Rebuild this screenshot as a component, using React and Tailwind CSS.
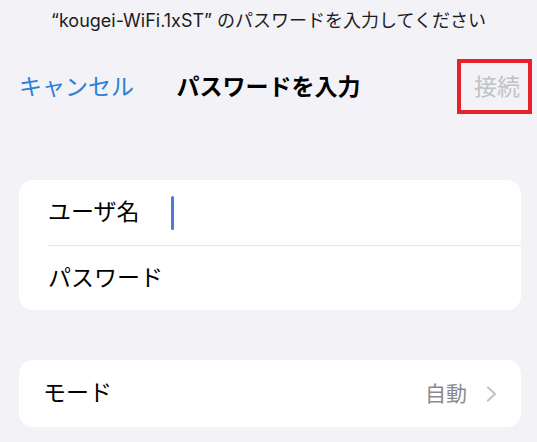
const font = "font-['Inter','Noto_Sans_CJK_JP',sans-serif]";

export default function App() {
  return (
    <div className={`h-[442px] w-full overflow-hidden bg-[#f2f2f7] ${font}`}>
      <p className="pt-[9px] text-center text-[18px] leading-[24px] text-[#1c1c1e]">
        “kougei-WiFi.1xST” のパスワードを入力してください
      </p>

      <div className="relative mt-[26px] grid h-[56px] grid-cols-[1fr_auto_1fr] items-center">
        <button className="justify-self-start pl-[19px] text-[23px] text-[#2b80d8]">
          キャンセル
        </button>
        <h1 className="text-[23px] font-bold text-black">パスワードを入力</h1>
        <button className="justify-self-end pr-[17px] text-[23px] text-[#c2c2c4]">
          接続
        </button>
        <div className="absolute right-[5px] top-0 h-[55px] w-[75px] border-4 border-[#e8202a]" />
      </div>

      <div className="ml-[19px] mr-[16px] mt-[65px] overflow-hidden rounded-[14px] bg-white">
        <div className="flex h-[65px] items-center pl-[29px]">
          <span className="w-[123px] text-[23px] text-black">ユーザ名</span>
          <div className="h-[34px] w-[3px] rounded-full bg-[#4c78d8]" />
        </div>
        <div className="ml-[29px] h-px bg-[#e5e5ea]" />
        <div className="flex h-[64px] items-center pl-[29px]">
          <span className="text-[23px] text-black">パスワード</span>
        </div>
      </div>

      <div className="ml-[19px] mr-[16px] mt-[50px] flex h-[67px] items-center justify-between rounded-[14px] bg-white pl-[24px] pr-[24px]">
        <span className="text-[23px] text-black">モード</span>
        <div className="flex items-center gap-[19px]">
          <span className="text-[21px] text-[#8a8a8e]">自動</span>
          <svg width="11" height="16" viewBox="0 0 11 16" fill="none">
            <path
              d="M2 1.5 L9 8 L2 14.5"
              stroke="#c4c4c8"
              strokeWidth="2.2"
              strokeLinecap="round"
              strokeLinejoin="round"
            />
          </svg>
        </div>
      </div>
    </div>
  );
}
